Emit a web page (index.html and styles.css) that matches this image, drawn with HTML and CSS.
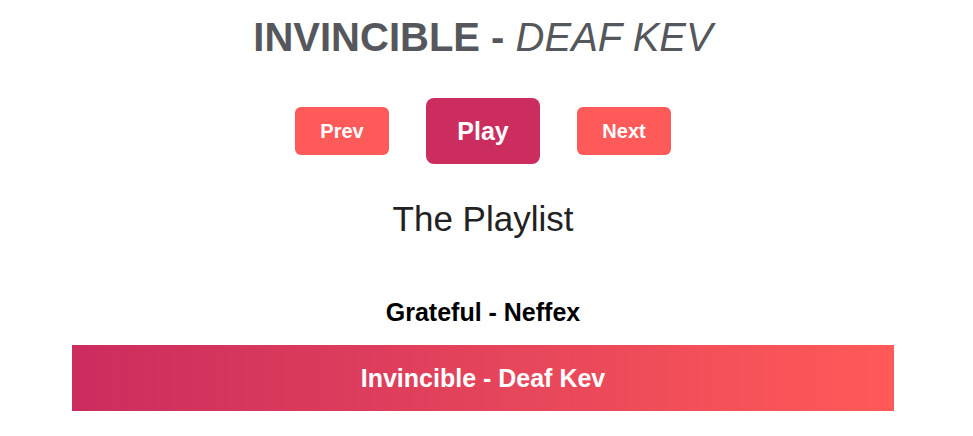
FILE: index.html
```html
<!DOCTYPE html>
<html>
<head>
<meta charset="utf-8">
<link rel="stylesheet" href="styles.css">
</head>
<body>
<div class="player">
  <h1 class="title"><b>INVINCIBLE - </b><i>DEAF KEV</i></h1>
  <div class="controls">
    <button class="btn small">Prev</button>
    <button class="btn big">Play</button>
    <button class="btn small">Next</button>
  </div>
  <h2 class="heading">The Playlist</h2>
  <ul class="playlist">
    <li class="track">Grateful - Neffex</li>
    <li class="track active">Invincible - Deaf Kev</li>
  </ul>
</div>
</body>
</html>
```

FILE: styles.css
```css
html, body {
  margin: 0;
  padding: 0;
  background: #fff;
  font-family: "Liberation Sans", Arial, sans-serif;
}
.player {
  display: flex;
  flex-direction: column;
  align-items: center;
  padding-right: 7px;
}
.title {
  margin: 14px 0 0;
  font-size: 40px;
  line-height: 46px;
  color: #55575c;
  font-weight: normal;
}
.title b { font-weight: bold; }
.title i { font-style: italic; font-weight: normal; }
.controls {
  display: flex;
  align-items: center;
  gap: 37px;
  margin-top: 38px;
}
.btn {
  border: none;
  color: #fff;
  font-family: "Liberation Sans", Arial, sans-serif;
  font-weight: bold;
  border-radius: 6px;
  padding: 0;
}
.btn.small {
  width: 94px;
  height: 48px;
  font-size: 20px;
  background: #ff5a5a;
}
.btn.big {
  width: 114px;
  height: 66px;
  font-size: 25px;
  background: #cb2d5e;
  border-radius: 8px;
}
.heading {
  margin: 35px 0 0;
  font-size: 35px;
  line-height: 40px;
  font-weight: normal;
  color: #222;
}
.playlist {
  list-style: none;
  margin: 40px 0 0;
  padding: 0;
  width: 822px;
}
.track {
  height: 66px;
  display: flex;
  align-items: center;
  justify-content: center;
  font-weight: bold;
  font-size: 25px;
  color: #000;
}
.track.active {
  color: #fff;
  background: linear-gradient(to right, #ca2d5e 0%, #ff5a58 100%);
}
```
